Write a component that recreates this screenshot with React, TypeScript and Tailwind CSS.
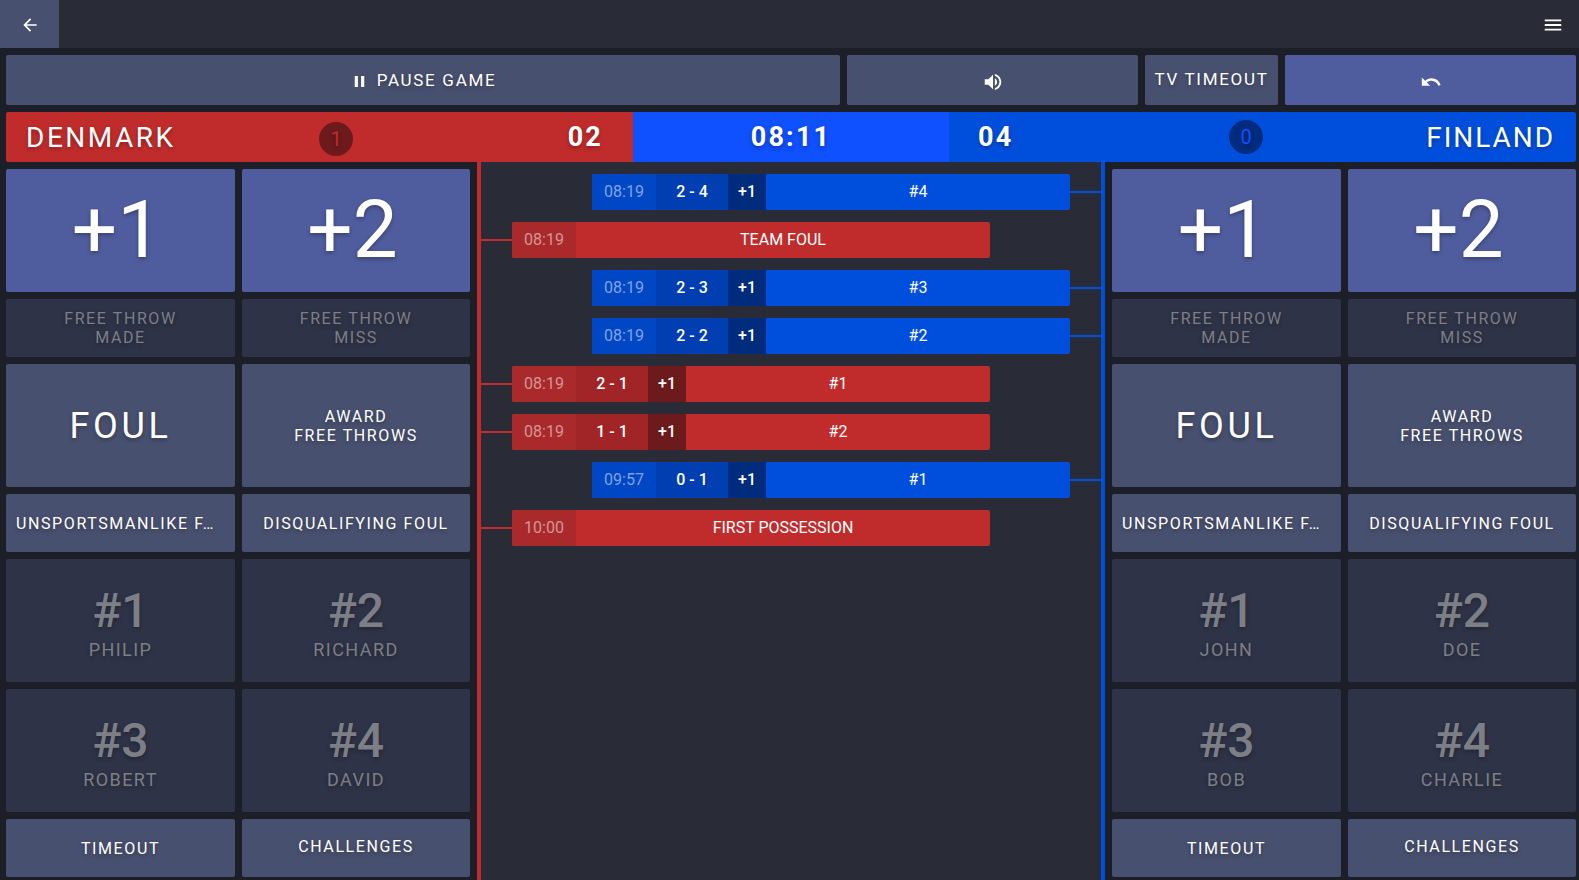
import { MdArrowBack, MdMenu, MdPause, MdUndo, MdVolumeUp } from "react-icons/md";

const sans = "[font-family:Roboto,'Liberation_Sans',sans-serif]";

type Tone = "score" | "action" | "player";

const tones: Record<Tone, string> = {
  score: "bg-[#4f5d9e] text-white",
  action: "bg-[#48506f] text-white",
  player: "bg-[#2f3347] text-[#7d7f87]",
};

const shadow = "[text-shadow:0_2px_4px_rgba(0,0,0,0.3)]";

const Tile = ({ tone, className = "", children }: { tone: Tone; className?: string; children: React.ReactNode }) => (
  <div className={`flex flex-col items-center justify-center rounded-[2px] text-center ${shadow} ${tones[tone]} ${className}`}>{children}</div>
);

const TeamPanel = ({ players }: { players: string[] }) => (
  <div className="grid grid-cols-[229px_228px] grid-rows-[123px_58px_123px_58px_123px_123px_58px] gap-x-[7px] gap-y-[7px]">
    <Tile tone="score" className="pr-[7px] pb-[2px] text-[80px] leading-none">+1</Tile>
    <Tile tone="score" className="pr-[7px] pb-[2px] text-[80px] leading-none">+2</Tile>
    <Tile tone="player" className="text-[16px] leading-[19px] tracking-[0.1em]"><span>FREE THROW</span><span>MADE</span></Tile>
    <Tile tone="player" className="text-[16px] leading-[19px] tracking-[0.1em]"><span>FREE THROW</span><span>MISS</span></Tile>
    <Tile tone="action" className="text-[36px] tracking-[0.1em]">FOUL</Tile>
    <Tile tone="action" className="text-[16px] leading-[19px] tracking-[0.1em]"><span>AWARD</span><span>FREE THROWS</span></Tile>
    <Tile tone="action" className="items-start pt-[2px] pl-[10px] text-[16px] tracking-[0.1em] whitespace-nowrap">UNSPORTSMANLIKE F…</Tile>
    <Tile tone="action" className="pt-[2px] text-[16px] tracking-[0.1em]">DISQUALIFYING FOUL</Tile>
    {players.map((name, i) => (
      <Tile key={name} tone="player" className="pt-[6px]">
        <span className="text-[48px] leading-[48px] font-medium">#{i + 1}</span>
        <span className="mt-1 text-[18px] leading-[21px] tracking-[0.08em]">{name}</span>
      </Tile>
    ))}
    <Tile tone="action" className="pt-[2px] text-[16px] tracking-[0.1em]">TIMEOUT</Tile>
    <Tile tone="action" className="pb-[2px] text-[16px] tracking-[0.1em]">CHALLENGES</Tile>
  </div>
);

type Event = { side: "home" | "away"; time: string; score?: string; points?: string; label: string };

const events: Event[] = [
  { side: "away", time: "08:19", score: "2 - 4", points: "+1", label: "#4" },
  { side: "home", time: "08:19", label: "TEAM FOUL" },
  { side: "away", time: "08:19", score: "2 - 3", points: "+1", label: "#3" },
  { side: "away", time: "08:19", score: "2 - 2", points: "+1", label: "#2" },
  { side: "home", time: "08:19", score: "2 - 1", points: "+1", label: "#1" },
  { side: "home", time: "08:19", score: "1 - 1", points: "+1", label: "#2" },
  { side: "away", time: "09:57", score: "0 - 1", points: "+1", label: "#1" },
  { side: "home", time: "10:00", label: "FIRST POSSESSION" },
];

const EventRow = ({ event }: { event: Event }) => {
  const home = event.side === "home";
  return (
    <div className={`flex h-9 items-center ${home ? "" : "flex-row-reverse"}`}>
      <div className={`h-[2px] w-[31px] ${home ? "bg-[#c02c2c]" : "bg-[#004fdc]"}`} />
      <div className={`flex h-9 w-[478px] overflow-hidden rounded-[2px] text-[16px] leading-9 text-white ${home ? "bg-[#c02c2c]" : "bg-[#004fdc]"}`}>
        <div className={`w-16 text-center text-white/50 ${home ? "bg-[#aa2a2b]" : "bg-[#0047c6]"}`}>{event.time}</div>
        {event.score && <div className={`w-[72px] text-center font-medium ${home ? "bg-[#a12526]" : "bg-[#003eb1]"}`}>{event.score}</div>}
        {event.points && <div className={`w-[38px] text-center font-medium ${home ? "bg-[#6c1a1b]" : "bg-[#002c7e]"}`}>{event.points}</div>}
        <div className="flex-1 text-center">{event.label}</div>
      </div>
    </div>
  );
};

export default function App() {
  return (
    <div className={`flex h-[880px] w-[1579px] flex-col overflow-hidden bg-[#1c1e28] ${sans}`}>
      <div className="flex h-12 items-center justify-between bg-[#292c36] text-white">
        <div className="flex h-12 w-[59px] items-center justify-center bg-[#48506f]">
          <MdArrowBack size={20} className="mt-[1px]" />
        </div>
        <MdMenu size={22} className="mt-[1px] mr-[15px]" />
      </div>

      <div className={`mt-[7px] flex h-[50px] gap-[7px] pr-[3px] pl-[6px] text-[17px] tracking-[0.1em] text-white ${shadow}`}>
        <div className="flex w-[834px] items-center justify-center gap-[8px] rounded-[2px] bg-[#48506f] pt-[1px]">
          <MdPause size={19} className="mt-[2px]" />
          PAUSE GAME
        </div>
        <div className="flex w-[291px] items-center justify-center rounded-[2px] bg-[#48506f]">
          <MdVolumeUp size={22} className="mt-[3px]" />
        </div>
        <div className="flex w-[133px] items-center justify-center rounded-[2px] bg-[#48506f]">TV TIMEOUT</div>
        <div className="flex flex-1 items-center justify-center rounded-[2px] bg-[#4f5d9e]">
          <MdUndo size={22} className="mt-[3px]" />
        </div>
      </div>

      <div className={`mt-[7px] mr-[3px] ml-[6px] flex h-[50px] overflow-hidden rounded-[2px] text-white ${shadow}`}>
        <div className="flex w-[627px] items-center bg-[#c02c2c] pr-[30px] pl-5">
          <span className="mt-[1px] w-[293px] text-[28px] tracking-[0.09em]">DENMARK</span>
          <span className="mt-[3px] flex h-[34px] w-[34px] items-center justify-center rounded-full bg-[#6c1a1b] text-[20px] text-[#c02c2c]">1</span>
          <span className="ml-auto text-[27px] font-bold tracking-[0.08em]">02</span>
        </div>
        <div className="flex w-[316px] items-center justify-center bg-[#0f50ff] text-[27px] font-bold tracking-[0.08em]">08:11</div>
        <div className="flex flex-1 items-center bg-[#004fdc] pr-[21px] pl-[29px]">
          <span className="w-[251px] text-[27px] font-bold tracking-[0.08em]">04</span>
          <span className="flex h-[34px] w-[34px] items-center justify-center rounded-full bg-[#002c7e] text-[20px] text-[#0f50ff]">0</span>
          <span className="mt-[1px] ml-auto text-[28px] tracking-[0.07em]">FINLAND</span>
        </div>
      </div>

      <div className="flex flex-1 pl-[6px]">
        <div className="pt-[7px]"><TeamPanel players={["PHILIP", "RICHARD", "ROBERT", "DAVID"]} /></div>
        <div className="ml-[7px] flex w-[628px] flex-col gap-3 self-stretch border-x-4 border-r-[#004fdc] border-l-[#c02c2c] bg-[#292c36] pt-3">
          {events.map((event, i) => <EventRow key={i} event={event} />)}
        </div>
        <div className="ml-[7px] pt-[7px]"><TeamPanel players={["JOHN", "DOE", "BOB", "CHARLIE"]} /></div>
      </div>
    </div>
  );
}
